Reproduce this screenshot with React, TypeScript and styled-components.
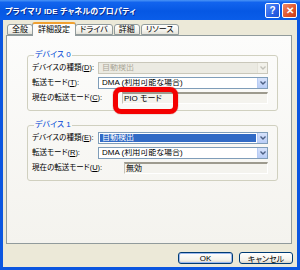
import React from "react";
import styled, { createGlobalStyle } from "styled-components";

const GlobalStyle = createGlobalStyle`
  html, body {
    margin: 0;
    padding: 0;
  }
  body {
    width: 300px;
    height: 270px;
    overflow: hidden;
    font-family: "Liberation Sans", "Noto Sans CJK JP", sans-serif;
    font-feature-settings: "palt";
  }
`;

const Window = styled.div`
  width: 300px;
  height: 270px;
  box-sizing: border-box;
  display: flex;
  flex-direction: column;
  background: #0b56e0;
`;

const TitleBar = styled.div`
  height: 20px;
  flex: none;
  display: flex;
  align-items: center;
  padding: 0 3px 0 5px;
  background: linear-gradient(180deg, #4a95f6 0%, #1264ee 12%, #0658e4 55%, #0a5de9 100%);
`;

const Title = styled.div`
  flex: 1;
  color: #fff;
  font-size: 8px;
  font-weight: bold;
  letter-spacing: 0.1px;
  text-shadow: 1px 1px 0 #0b2a8a;
`;

const CaptionButton = styled.div<{ $kind: "help" | "close" }>`
  width: 13px;
  height: 13px;
  margin-left: 2px;
  border: 1px solid #fff;
  border-radius: 2px;
  display: flex;
  align-items: center;
  justify-content: center;
  color: #fff;
  font-size: 10px;
  font-weight: bold;
  background: ${(p) =>
    p.$kind === "help"
      ? "linear-gradient(135deg, #5a8ff7 0%, #2a62e8 60%, #1f50d0 100%)"
      : "linear-gradient(135deg, #f08a66 0%, #e0532b 60%, #c63d1a 100%)"};
`;

const Client = styled.div`
  flex: 1;
  margin: 0 3px 3px;
  background: #ece9d8;
  display: flex;
  flex-direction: column;
  padding: 2px 5px 0 3px;
`;

const TabStrip = styled.div`
  height: 13px;
  display: flex;
  align-items: flex-end;
  padding-left: 1px;
  position: relative;
  z-index: 1;
`;

const Tab = styled.div<{ $active?: boolean }>`
  box-sizing: border-box;
  height: ${(p) => (p.$active ? "14px" : "11px")};
  margin: ${(p) => (p.$active ? "0 -1px -1px -2px" : "0 1px 0 0")};
  padding: ${(p) => (p.$active ? "1px 5px 0" : "0 4px")};
  border: 1px solid #919b9c;
  border-bottom: ${(p) => (p.$active ? "none" : "1px solid #919b9c")};
  border-top: ${(p) => (p.$active ? "2px solid #f0a030" : "1px solid #919b9c")};
  border-radius: 3px 3px 0 0;
  background: ${(p) =>
    p.$active ? "#fcfcfb" : "linear-gradient(180deg, #ffffff 0%, #f4f3ee 60%, #e4e2d8 100%)"};
  font-size: 8px;
  line-height: 9px;
  color: #000;
  white-space: nowrap;
  position: relative;
  z-index: ${(p) => (p.$active ? 2 : 0)};
`;

const Panel = styled.div`
  height: 209px;
  box-sizing: border-box;
  border: 1px solid #919b9c;
  background: linear-gradient(180deg, #fcfcfb 0%, #f4f3ee 100%);
  padding: 14px 13px 0 20px;
  display: flex;
  flex-direction: column;
  gap: 9px;
`;

const Group = styled.fieldset`
  margin: 0;
  padding: 2px 9px 6px 4px;
  min-width: 0;
  border: 1px solid #d0d0bf;
  border-radius: 3px;
  display: flex;
  flex-direction: column;
  gap: 3px;
`;

const Legend = styled.legend`
  padding: 0 1px;
  margin-left: 2px;
  font-size: 8px;
  line-height: 10px;
  color: #0046d5;
`;

const Row = styled.div`
  display: flex;
  align-items: center;
  height: 12px;
`;

const Label = styled.div`
  width: 66px;
  flex: none;
  font-size: 7.5px;
  line-height: 12px;
  color: #000;
  white-space: nowrap;
`;

const Key = styled.span`
  text-decoration: underline;
`;

const Combo = styled.div<{ $state?: "disabled" | "focused" }>`
  flex: 1;
  height: 12px;
  box-sizing: border-box;
  display: flex;
  border: 1px solid ${(p) => (p.$state === "disabled" ? "#c9c7ba" : "#7f9db9")};
  background: ${(p) => (p.$state === "disabled" ? "#ebeae2" : "#fff")};
`;

const ComboText = styled.div<{ $state?: "disabled" | "focused" }>`
  flex: 1;
  margin: 1px;
  padding-left: 2px;
  font-size: 8px;
  line-height: 8px;
  white-space: nowrap;
  overflow: hidden;
  color: ${(p) => (p.$state === "disabled" ? "#aca899" : p.$state === "focused" ? "#fff" : "#000")};
  background: ${(p) => (p.$state === "focused" ? "#316ac5" : "transparent")};
`;

const DropButton = styled.div<{ $disabled?: boolean }>`
  width: 9px;
  flex: none;
  display: flex;
  align-items: center;
  justify-content: center;
  background: ${(p) =>
    p.$disabled ? "#f2f1ea" : "linear-gradient(180deg, #d6e2fb 0%, #b9cdf6 100%)"};
  border-left: 1px solid ${(p) => (p.$disabled ? "#e4e2d8" : "#b8ccf4")};
`;

const Field = styled.div<{ $indent: number }>`
  flex: 1;
  height: 12px;
  margin-left: ${(p) => p.$indent}px;
  box-sizing: border-box;
  position: relative;
  border-top: 2px solid #9d9a8e;
  border-left: 1px solid #c5c2b6;
  border-right: 1px solid #fff;
  border-bottom: 1px solid #fff;
  background: #f4f3ee;
  padding-left: 1px;
  font-size: 8px;
  line-height: 9px;
  color: #000;
  white-space: nowrap;
`;

const Highlight = styled.span`
  position: absolute;
  left: -10px;
  top: -7px;
  width: 65px;
  height: 27px;
  box-sizing: border-box;
  border: 5px solid #f40000;
  border-radius: 8px;
  box-shadow: 0 0 1px #900;
  pointer-events: none;
`;

const Footer = styled.div`
  display: flex;
  justify-content: flex-end;
  gap: 6px;
  padding-top: 8px;
  margin-right: -1px;
`;

const Button = styled.div<{ $width: number; $default?: boolean }>`
  width: ${(p) => p.$width}px;
  height: 12px;
  box-sizing: border-box;
  border: 1px solid #003c74;
  border-radius: 3px;
  background: linear-gradient(180deg, #ffffff 0%, #f3f2ec 70%, #d9d4c8 100%);
  box-shadow: ${(p) => (p.$default ? "inset 0 0 0 1px #9bb8ee" : "none")};
  display: flex;
  align-items: center;
  justify-content: center;
  font-size: 8px;
  color: #000;
`;

const Chevron = ({ disabled }: { disabled?: boolean }) => (
  <svg width="6" height="4" viewBox="0 0 6 4">
    <polyline
      points="0.5,0.5 3,3 5.5,0.5"
      fill="none"
      stroke={disabled ? "#c3c2ba" : "#4d6185"}
      strokeWidth="1.4"
    />
  </svg>
);

const DropDown = ({ text, state }: { text: string; state?: "disabled" | "focused" }) => (
  <Combo $state={state}>
    <ComboText $state={state}>{text}</ComboText>
    <DropButton $disabled={state === "disabled"}>
      <Chevron disabled={state === "disabled"} />
    </DropButton>
  </Combo>
);

const App = () => {
  return (
    <>
      <GlobalStyle />
      <Window>
        <TitleBar>
          <Title>プライマリ IDE チャネルのプロパティ</Title>
          <CaptionButton $kind="help">?</CaptionButton>
          <CaptionButton $kind="close">✕</CaptionButton>
        </TitleBar>
        <Client>
          <TabStrip>
            <Tab>全般</Tab>
            <Tab $active>詳細設定</Tab>
            <Tab>ドライバ</Tab>
            <Tab>詳細</Tab>
            <Tab>リソース</Tab>
          </TabStrip>
          <Panel>
            <Group>
              <Legend>デバイス 0</Legend>
              <Row>
                <Label>
                  デバイスの種類(<Key>D</Key>):
                </Label>
                <DropDown text="自動検出" state="disabled" />
              </Row>
              <Row>
                <Label>
                  転送モード(<Key>T</Key>):
                </Label>
                <DropDown text="DMA (利用可能な場合)" />
              </Row>
              <Row>
                <Label>
                  現在の転送モード(<Key>C</Key>):
                </Label>
                <Field $indent={24}>
                  PIO モード
                  <Highlight />
                </Field>
              </Row>
            </Group>
            <Group>
              <Legend>デバイス 1</Legend>
              <Row>
                <Label>
                  デバイスの種類(<Key>E</Key>):
                </Label>
                <DropDown text="自動検出" state="focused" />
              </Row>
              <Row>
                <Label>
                  転送モード(<Key>R</Key>):
                </Label>
                <DropDown text="DMA (利用可能な場合)" />
              </Row>
              <Row>
                <Label>
                  現在の転送モード(<Key>U</Key>):
                </Label>
                <Field $indent={26}>無効</Field>
              </Row>
            </Group>
          </Panel>
          <Footer>
            <Button $width={55} $default>
              OK
            </Button>
            <Button $width={54}>キャンセル</Button>
          </Footer>
        </Client>
      </Window>
    </>
  );
};

export default App;
